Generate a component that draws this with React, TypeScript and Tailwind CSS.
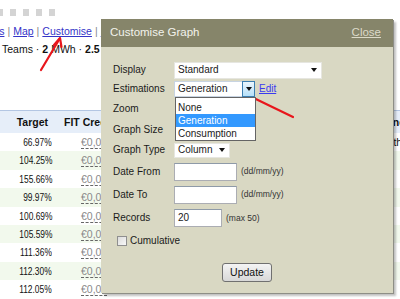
const targets = ['66.97%', '104.25%', '155.66%', '99.97%', '100.69%', '105.59%', '111.36%', '112.30%', '112.05%']

function Caret() {
  return (
    <svg width="6" height="4" viewBox="0 0 6 4" className="shrink-0">
      <path d="M0 0h6L3 4z" fill="#111" />
    </svg>
  )
}

function Label({ children }: { children: React.ReactNode }) {
  return <div className="w-[61px] shrink-0">{children}</div>
}

export default function App() {
  return (
    <div className="relative h-[299px] w-[400px] overflow-hidden bg-white font-['Liberation_Sans',Arial,sans-serif] text-[#111]">
      {/* toolbar squares */}
      <div className="-ml-[3px] flex gap-[7px] pt-[9px]">
        {[0, 1, 2, 3, 4].map((i) => (
          <div key={i} className="h-[7px] w-[6px] bg-[#d4d4d4]" />
        ))}
      </div>

      {/* links */}
      <div className="-ml-[30px] mt-[8px] flex h-[14px] items-center whitespace-nowrap text-[10.5px] leading-none">
        <span className="text-[#3434c8] underline">Graphs</span>
        <span className="px-[3px] text-[#888]">|</span>
        <span className="text-[#3434c8] underline">Map</span>
        <span className="px-[3px] text-[#888]">|</span>
        <span className="text-[#3434c8] underline">Customise</span>
        <span className="px-[3px] text-[#888]">|</span>
        <span className="text-[#3434c8] underline">More</span>
      </div>

      {/* summary */}
      <div className="mt-[4px] flex h-[14px] items-center whitespace-nowrap pl-[2px] text-[10.5px] leading-none">
        Teams · <b className="mx-[3px]">2</b> MWh · <b className="ml-[3px]">2.5</b>
      </div>

      {/* table */}
      <div className="mt-[54px] w-[520px] text-[10.5px] leading-none">
        <div className="flex h-[23px] items-center border-t border-[#b3c6e3] bg-[#e6eef9] font-bold">
          <div className="w-[48px] shrink-0 text-right">Target</div>
          <div className="w-[325px] shrink-0 pl-[16px]">FIT Credit</div>
          <div>Phone</div>
        </div>
        {targets.map((t, i) => (
          <div key={t} className={`flex h-[18.4px] items-center ${i % 2 === 1 ? 'bg-[#f2f9ed]' : 'bg-white'}`}>
            <div className="w-[52px] shrink-0 text-right">
              <span className="inline-block origin-right scale-x-[0.8]">{t}</span>
            </div>
            <div className="w-[321px] shrink-0 pl-[29px] text-[#8a8a8a]">
              <span className="underline decoration-dashed decoration-[#666] underline-offset-2">€0,00</span>
            </div>
            <div>{i === 0 ? 'Month' : ''}</div>
          </div>
        ))}
      </div>

      {/* dialog */}
      <div className="absolute left-[101px] top-[19px] h-[274px] w-[292px] bg-[#d9d8c3] shadow-[1px_1px_0_#8e8e86,3px_3px_2px_rgba(0,0,0,0.25)]">
        <div className="flex h-[28px] items-center justify-between bg-[#86856a] pl-[9px] pr-[12px] text-[11.5px] leading-none">
          <span className="text-[#f3f3ec]">Customise Graph</span>
          <span className="text-[#dcdac8] underline">Close</span>
        </div>

        <div className="pl-[12px] pt-[14px] text-[10px] leading-none text-[#1a1a1a]">
          <div className="flex h-[18px] items-center">
            <Label>Display</Label>
            <div className="flex h-[17px] w-[148px] items-center justify-between border border-[#e6e6e0] bg-white pl-[3px] pr-[4px]">
              Standard <Caret />
            </div>
          </div>

          <div className="flex h-[20px] items-center">
            <Label>Estimations</Label>
            <div className="relative z-10 flex h-[16px] w-[81px] border border-[#c8d4e2] bg-white">
              <div className="flex flex-1 items-center pl-[3px]">Generation</div>
              <div className="-my-px -mr-px flex w-[13px] items-center justify-center border border-[#3c7fb1] bg-gradient-to-b from-[#eaf6fd] to-[#b6e0f8]">
                <Caret />
              </div>
              <div className="absolute left-[0px] top-[15px] w-[81px] border border-[#646464] bg-white pt-[3px]">
                <div className="flex h-[13px] items-center pl-[2px]">None</div>
                <div className="flex h-[13px] items-center bg-[#3399ff] pl-[2px] text-white">Generation</div>
                <div className="flex h-[13px] items-center pl-[2px]">Consumption</div>
              </div>
            </div>
            <span className="ml-[4px] text-[#3a3af0] underline">Edit</span>
          </div>

          <div className="flex h-[20px] items-center">
            <Label>Zoom</Label>
          </div>

          <div className="flex h-[21px] items-center">
            <Label>Graph Size</Label>
          </div>

          <div className="flex h-[20px] items-center">
            <Label>Graph Type</Label>
            <div className="flex h-[15px] w-[56px] items-center justify-between border border-[#e6e6e0] bg-white pl-[3px] pr-[4px]">
              Column <Caret />
            </div>
          </div>

          <div className="flex h-[23px] items-center">
            <Label>Date From</Label>
            <div className="h-[18px] w-[63px] border border-[#abadb3] border-t-[#8e9aa8] bg-white" />
            <span className="ml-[4px] text-[8.5px] text-[#333]">(dd/mm/yy)</span>
          </div>

          <div className="flex h-[23px] items-center">
            <Label>Date To</Label>
            <div className="h-[18px] w-[63px] border border-[#abadb3] border-t-[#8e9aa8] bg-white" />
            <span className="ml-[4px] text-[8.5px] text-[#333]">(dd/mm/yy)</span>
          </div>

          <div className="flex h-[24px] items-center">
            <Label>Records</Label>
            <div className="flex h-[18px] w-[48px] items-center border border-[#abadb3] border-t-[#8e9aa8] bg-white pl-[3px]">20</div>
            <span className="ml-[4px] text-[8.5px] text-[#333]">(max 50)</span>
          </div>

          <div className="flex h-[21px] items-center pl-[4px]">
            <div className="h-[10px] w-[10px] border border-[#8f8f8f] bg-gradient-to-br from-[#dcdcdc] to-[#f8f8f8]" />
            <span className="ml-[3px]">Cumulative</span>
          </div>
        </div>

        <div className="mt-[12px] flex justify-center">
          <div className="flex h-[19px] w-[50px] items-center justify-center rounded-[3px] border border-[#707070] bg-gradient-to-b from-[#f4f4f4] to-[#d8d8d8] text-[10.5px] leading-none">
            Update
          </div>
        </div>
      </div>

      {/* annotation arrows */}
      <svg className="pointer-events-none absolute left-0 top-0" width="400" height="299" viewBox="0 0 400 299">
        <g stroke="#e8161c" strokeWidth="2.2" strokeLinecap="round" strokeLinejoin="round" fill="none">
          <path d="M41 70L59.5 39" />
          <path d="M54 45L60 38L61.5 47" />
          <path d="M293 117L233 88" />
          <path d="M245 85L233 88L241 96" />
        </g>
      </svg>
    </div>
  )
}
